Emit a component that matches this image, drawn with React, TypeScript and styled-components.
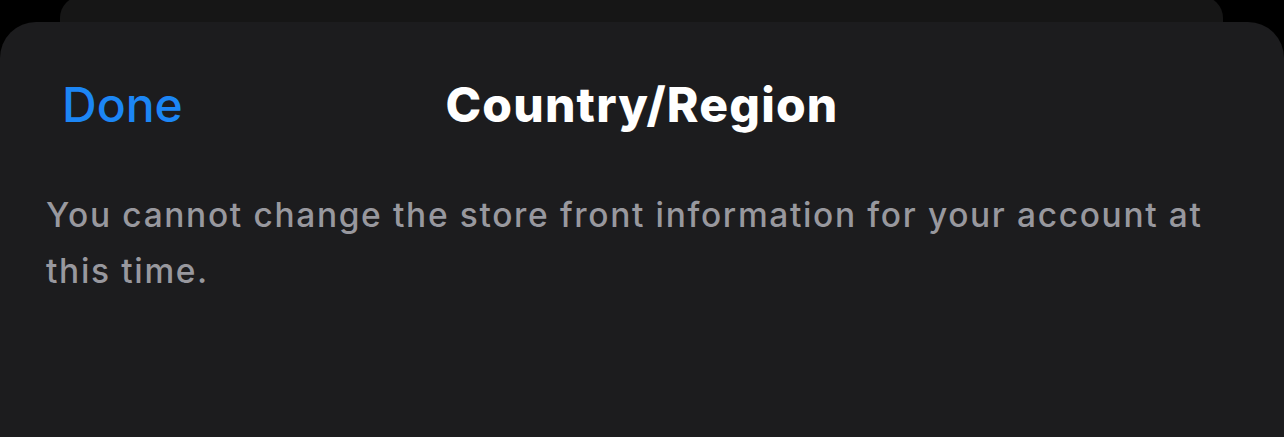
import React from "react";
import styled, { createGlobalStyle } from "styled-components";

const Global = createGlobalStyle`
  html, body { margin: 0; padding: 0; background: #000; }
  body { width: 1284px; height: 437px; overflow: hidden; font-family: Inter, "Noto Sans", sans-serif; }
`;

const Stage = styled.div`
  position: relative;
  width: 1284px;
  height: 437px;
  background: #000;
  overflow: hidden;
`;

const BackCard = styled.div`
  position: absolute;
  left: 60px;
  right: 61px;
  top: -4px;
  height: 200px;
  background: #161616;
  border-radius: 22px;
`;

const Sheet = styled.div`
  position: absolute;
  left: 0;
  right: 0;
  top: 22px;
  bottom: 0;
  background: #1c1c1e;
  border-radius: 36px 36px 0 0;
  display: flex;
  flex-direction: column;
`;

const NavBar = styled.div`
  display: grid;
  grid-template-columns: 1fr auto 1fr;
  align-items: center;
  height: 60px;
  margin-top: 52px;
  padding: 0 62px;
`;

const DoneButton = styled.button`
  justify-self: start;
  background: none;
  border: none;
  padding: 0;
  font-family: Inter, "Noto Sans", sans-serif;
  font-size: 48px;
  font-weight: 500;
  color: #1c86f5;
  letter-spacing: 0px;
  cursor: pointer;
`;

const Title = styled.h1`
  margin: 0;
  font-family: Inter, "Noto Sans", sans-serif;
  font-size: 48px;
  font-weight: 800;
  color: #fff;
  letter-spacing: 1.2px;
`;

const Message = styled.p`
  margin: 53px 0 0 0;
  padding: 0 46px;
  font-family: Inter, "Noto Sans", sans-serif;
  font-size: 33.5px;
  font-weight: 500;
  line-height: 56px;
  color: #98989e;
  letter-spacing: 1.65px;
`;

export default function App() {
  return (
    <>
      <Global />
      <Stage>
        <BackCard />
        <Sheet>
          <NavBar>
            <DoneButton>Done</DoneButton>
            <Title>Country/Region</Title>
            <span />
          </NavBar>
          <Message>
            You cannot change the store front information for your account at
            this time.
          </Message>
        </Sheet>
      </Stage>
    </>
  );
}
